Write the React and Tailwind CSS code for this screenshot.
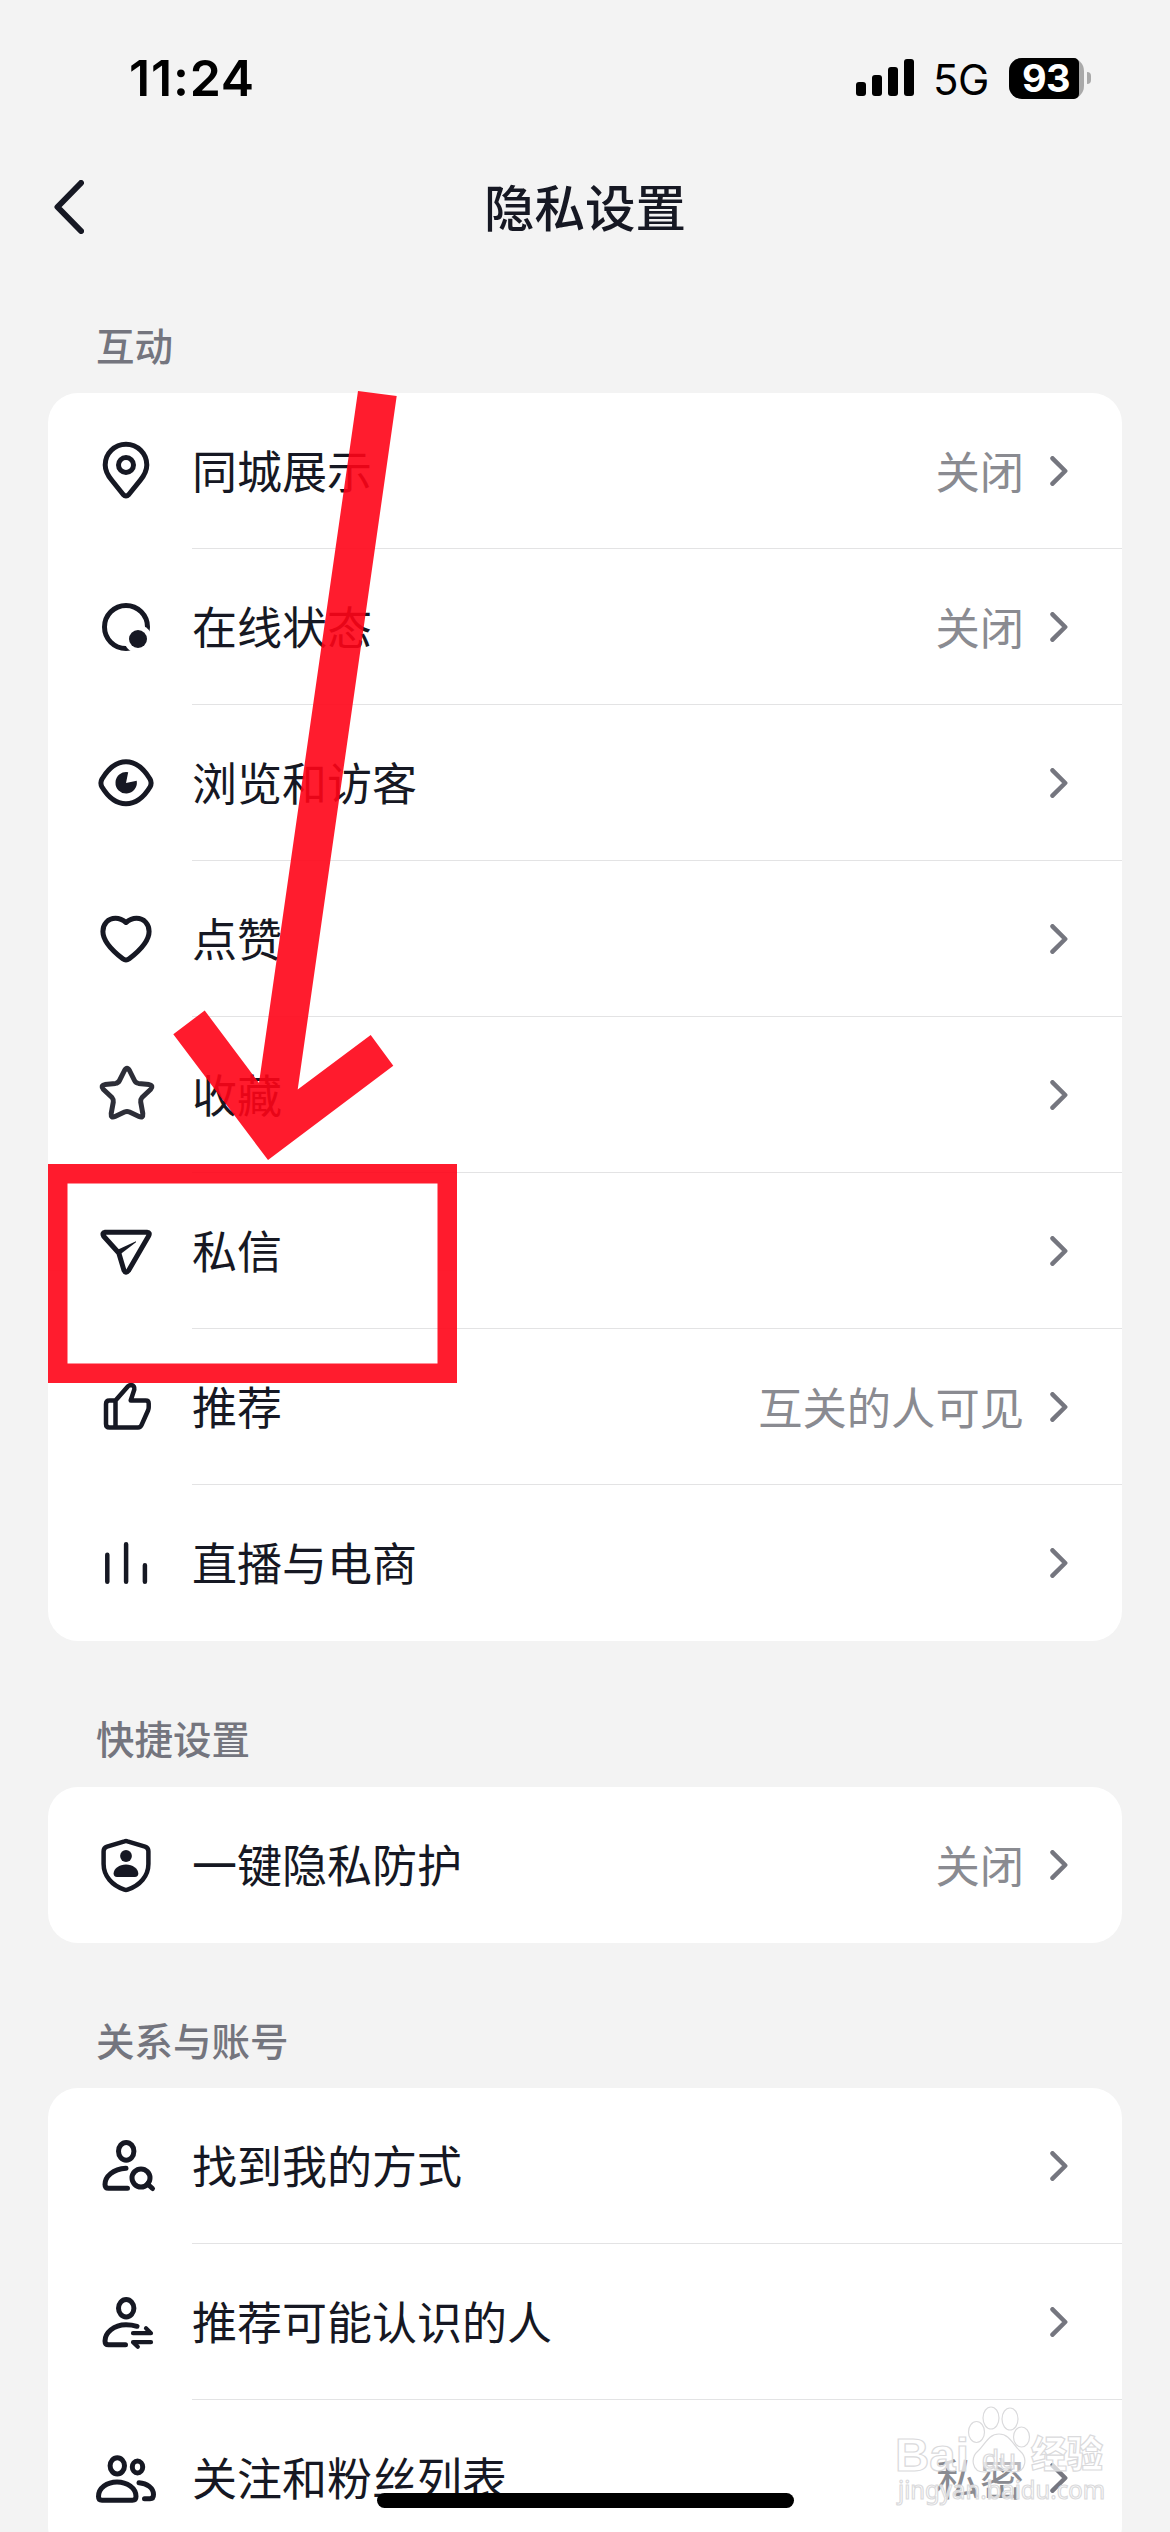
import React from 'react';

// Row icons share a 72px grid and inherit the text colour
const Icon = ({ children, width = 5, className = '' }) => (
  <svg
    viewBox="0 0 72 72"
    fill="none"
    stroke="currentColor"
    strokeWidth={width}
    strokeLinecap="round"
    strokeLinejoin="round"
    className={`w-[72px] h-[72px] flex-shrink-0 ${className}`}
  >
    {children}
  </svg>
);

const PinIcon = () => (
  <Icon>
    <path d="M15.2 30a20.8 20.8 0 0 1 41.6 0c0 6.500-2.600 10.500-6.600 15.300L38.800 59.500q-2.800 3-5.600 0L21.800 45.300C17.800 40.500 15.200 36.500 15.200 30z" />
    <circle cx="36" cy="30" r="7.500" />
  </Icon>
);

const OnlineIcon = () => (
  <Icon>
    <circle cx="36" cy="36" r="21.500" />
    <circle cx="48" cy="48" r="14" fill="#fff" stroke="none" />
    <circle cx="48" cy="48" r="9" fill="currentColor" stroke="none" />
  </Icon>
);

const EyeIcon = () => (
  <Icon>
    <path d="M12 32C18 22 26 14.800 36 14.800S54 22 60 32q2.200 4 0 8C54 50 46 56.700 36 56.700S18 50 12 40q-2.200-4 0-8z" />
    <path d="M36 36L38.200 25.300A10.700 10.700 0 1 0 46.700 33.800Z" fill="currentColor" stroke="none" />
  </Icon>
);

const HeartIcon = () => (
  <Icon>
    <path d="M36 19.500C32.500 16.500 29.500 15.300 25.500 15.300C18 15.300 12.900 21 12.900 28.500C12.900 38.500 22 47.500 32.800 55.800q3.200 2.400 6.400 0C50 47.500 59.100 38.500 59.100 28.500C59.100 21 54 15.300 46.500 15.300C42.500 15.300 39.500 16.500 36 19.500z" />
  </Icon>
);

const StarIcon = () => (
  <Icon className="text-[#2d2e38]">
    <path d="M34.500 11.500Q37 7 39.500 11.500L44.500 21.500Q45.800 24 48.500 24.400L59 25.600Q64 26.800 60.500 30.500L52 38.500Q50.300 40.500 50.700 43L52.800 54.500Q53.300 59.500 49 57.500L39.500 53Q37 52 34.500 53L25 57.500Q20.700 59.500 21.200 54.500L23.300 43Q23.700 40.500 22 38.500L13.500 30.500Q10 26.800 15 25.600L25.500 24.400Q28.200 24 29.500 21.500Z" />
  </Icon>
);

const SendIcon = () => (
  <Icon>
    <path d="M15 17.300H57q3.500.3 1.600 3.600L38.600 55.500q-2.900 3.500-4.700-.4L28.800 38L13.700 21.300q-2-3.600 1.300-4z" />
    <path d="M27 35L46 26.200L46 27.200L30 39.500z" fill="currentColor" stroke="none" />
  </Icon>
);

const ThumbIcon = () => (
  <Icon width={4.5}>
    <path d="M25.500 56.500V29.500H19.500q-3.500 0-3.500 3.500V53q0 3.500 3.500 3.500H48q2.500 0 3.500-2.300L58 39.500q.7-1.600.7-3.300V32.500q0-3-3-3H40.700L44.300 18.500q.6-4-3-4.400q-2 0-3.500 1.300L25.500 29.500" />
  </Icon>
);

const BarsIcon = () => (
  <Icon width={4.5}>
    <path d="M17.300 27.700V54.700M36.100 17.300V54.700M54.900 38.200V54.700" />
  </Icon>
);

const ShieldIcon = () => (
  <Icon width={4.5}>
    <path d="M34.500 12.300q1.500-.5 3 0L55 17.600q3.400 1.200 3.400 4.600V35C58.400 47 50 56.500 37.600 60.600q-1.600.6-3.200 0C22 56.500 13.600 47 13.600 35V22.200q0-3.400 3.400-4.600z" />
    <circle cx="36" cy="27" r="5.900" fill="currentColor" stroke="none" />
    <path d="M36 35.600c6.500 0 12.300 4 12.300 9q0 3.400-3.400 3.400H27q-3.400 0-3.400-3.400c0-5 5.800-9 12.400-9z" fill="currentColor" stroke="none" />
  </Icon>
);

const PersonSearchIcon = () => (
  <Icon>
    <ellipse cx="36.200" cy="21.300" rx="7.700" ry="8.900" />
    <path d="M36 38.200C23 39 15 46.500 15 54.500q0 3.800 3.500 3.800H37.500" />
    <circle cx="51" cy="48" r="9" />
    <path d="M57.500 54L62.500 58.500" />
  </Icon>
);

const PersonSwapIcon = () => (
  <Icon>
    <ellipse cx="36.200" cy="22.200" rx="7.700" ry="8.700" />
    <path d="M47 40.300C43.500 39.300 40 38.800 36 38.800C23.500 38.800 15 47 15 55q0 3.800 3.500 3.800H35.500" />
    <path d="M43 47.200H61L56 42.300M61 56.200H43L47.800 60.700" strokeWidth="4.2" />
  </Icon>
);

const PeopleIcon = () => (
  <Icon>
    <ellipse cx="27.300" cy="23.800" rx="7.200" ry="8.100" />
    <ellipse cx="47.500" cy="25" rx="5.200" ry="5.900" />
    <path d="M8.500 54.500C8.500 46 17 40 27 40S46 46 46 54.500q0 3.700-3.600 3.700H12q-3.500 0-3.500-3.700z" />
    <path d="M49 40.700C57 41.200 63.500 46 63.500 52.500q0 4.300-3.500 4.300H54.500" />
  </Icon>
);

const sections = [
  {
    title: '互动',
    rows: [
      { icon: PinIcon, label: '同城展示', value: '关闭' },
      { icon: OnlineIcon, label: '在线状态', value: '关闭' },
      { icon: EyeIcon, label: '浏览和访客' },
      { icon: HeartIcon, label: '点赞' },
      { icon: StarIcon, label: '收藏' },
      { icon: SendIcon, label: '私信' },
      { icon: ThumbIcon, label: '推荐', value: '互关的人可见' },
      { icon: BarsIcon, label: '直播与电商' },
    ],
  },
  {
    title: '快捷设置',
    rows: [{ icon: ShieldIcon, label: '一键隐私防护', value: '关闭' }],
  },
  {
    title: '关系与账号',
    rows: [
      { icon: PersonSearchIcon, label: '找到我的方式' },
      { icon: PersonSwapIcon, label: '推荐可能认识的人' },
      { icon: PeopleIcon, label: '关注和粉丝列表', value: '私密' },
    ],
  },
];

const StatusBar = () => (
  <div className="h-[150px] pt-[54px] pl-[129px] pr-[79px] flex items-start justify-between text-black font-['Inter',sans-serif]">
    <span className="text-[50px] leading-[48px] font-semibold tracking-[0.8px]">11:24</span>
    <div className="flex items-center h-[48px]">
      <div className="flex items-end gap-[6px] h-[37px] -mt-[2px]">
        <span className="w-[10px] h-[14px] rounded-[3px] bg-black" />
        <span className="w-[10px] h-[21px] rounded-[3px] bg-black" />
        <span className="w-[10px] h-[29px] rounded-[3px] bg-black" />
        <span className="w-[10px] h-[37px] rounded-[3px] bg-black" />
      </div>
      <span className="w-[54px] ml-[19px] text-[42px] leading-[48px] mt-[3px] tracking-[-0.5px]">5G</span>
      <div className="ml-[22px] w-[75px] h-[41px] rounded-[13px] bg-[#a9a9a9]">
        <div className="w-[70px] h-[41px] pl-[4px] rounded-l-[13px] rounded-r-[5px] bg-black text-white text-[38px] leading-[41px] font-bold text-center tracking-[-0.5px]">
          93
        </div>
      </div>
      <span className="ml-[3px] w-[4px] h-[12px] rounded-r-full bg-[#a9a9a9]" />
    </div>
  </div>
);

const Row = ({ icon: RowIcon, label, value, last }) => (
  <div className="h-[156px] pl-[42px] flex items-stretch">
    <div className="flex items-center mr-[30px]">
      <RowIcon />
    </div>
    <div className={`flex-1 flex items-center pr-[54px] ${last ? '' : 'border-b border-[#e3e3e4]'}`}>
      <span className="flex-1 text-[45px] leading-[66px] pb-[2px]">{label}</span>
      {value && <span className="text-[44.3px] leading-[66px] pb-[2px] text-[#8a8b91]">{value}</span>}
      <svg
        viewBox="0 0 18 30"
        fill="none"
        stroke="#75767f"
        strokeWidth="4.500"
        strokeLinecap="round"
        strokeLinejoin="round"
        className="w-[18px] h-[30px] ml-[26px]"
      >
        <path d="M2.500 2.300L15.200 15L2.500 27.700" />
      </svg>
    </div>
  </div>
);

const Section = ({ title, rows }) => (
  <section>
    <h2 className="h-[145.5px] pt-[68px] pl-[48px] text-[38.5px] leading-[56px] font-medium text-[#74757e]">{title}</h2>
    <div className="rounded-[30px] bg-white">
      {rows.map((row, i) => (
        <Row key={row.label} {...row} last={i === rows.length - 1} />
      ))}
    </div>
  </section>
);

// Red arrow and frame that point at the 私信 row
const Highlight = () => (
  <svg viewBox="0 0 1170 2532" className="absolute inset-0 w-[1170px] h-[2532px]">
    <g fill="#ff0317" opacity="0.9">
      <path d="M358 391L396.700 396L297.700 1089.500L370.700 1035L393.300 1065.700L268 1160L173.300 1034.200L204.700 1010.500L259 1083Z" />
      <path fillRule="evenodd" d="M48 1164H457V1383H48ZM67.500 1183.500V1363.500H437.500V1183.500Z" />
    </g>
  </svg>
);

const Watermark = () => (
  <svg
    viewBox="0 0 240 130"
    fill="#fff"
    fillOpacity="0.7"
    stroke="#dadadc"
    strokeWidth="1.200"
    className="absolute left-[880px] top-[2395px] w-[240px] h-[130px]"
  >
    <ellipse cx="96.500" cy="37" rx="8" ry="10.500" />
    <ellipse cx="111" cy="23" rx="8" ry="11" />
    <ellipse cx="130" cy="24" rx="8" ry="11" />
    <ellipse cx="141.500" cy="42" rx="8" ry="10" />
    <path fillOpacity="0.4" d="M119 39C108 39 105 50 98 56C90 63 92 77 104 77C110 77 114 75 119 75S128 77 134 77C146 77 148 63 140 56C133 50 130 39 119 39Z" />
    <text x="15" y="76" fontSize="47" fontWeight="700" textLength="74" lengthAdjust="spacingAndGlyphs" fontFamily="Liberation Sans, sans-serif">Bai</text>
    <text x="102" y="74" fontSize="28" textLength="34" lengthAdjust="spacingAndGlyphs" fontFamily="Liberation Sans, sans-serif">du</text>
    <text x="151" y="73" fontSize="37" fontWeight="900" textLength="72" lengthAdjust="spacingAndGlyphs" fontFamily="Noto Sans CJK SC, sans-serif">经验</text>
    <text x="18" y="104" fontSize="25" textLength="207" lengthAdjust="spacingAndGlyphs" fontFamily="Noto Sans, sans-serif">jingyan.baidu.com</text>
  </svg>
);

const App = () => {
  return (
    <div className="relative w-[1170px] h-[2532px] overflow-hidden bg-[#f3f3f3] text-[#161823] font-['Noto_Sans_CJK_SC',sans-serif]">
      <StatusBar />
      <header className="grid grid-cols-[1fr_auto_1fr] items-center h-[97.5px] px-[54px]">
        <svg
          viewBox="0 0 30 54"
          fill="none"
          stroke="currentColor"
          strokeWidth="6"
          strokeLinecap="round"
          strokeLinejoin="round"
          className="w-[30px] h-[54px] mt-[16px]"
        >
          <path d="M27 3L3.500 27L27 51" />
        </svg>
        <h1 className="mt-[13px] text-[50.5px] leading-[72px] font-medium">隐私设置</h1>
        <span />
      </header>
      <main className="px-[48px]">
        {sections.map((section) => (
          <Section key={section.title} {...section} />
        ))}
      </main>
      <Highlight />
      <div className="absolute left-[377px] top-[2493px] w-[417px] h-[15px] rounded-full bg-black" />
      <Watermark />
    </div>
  );
};

export default App;
